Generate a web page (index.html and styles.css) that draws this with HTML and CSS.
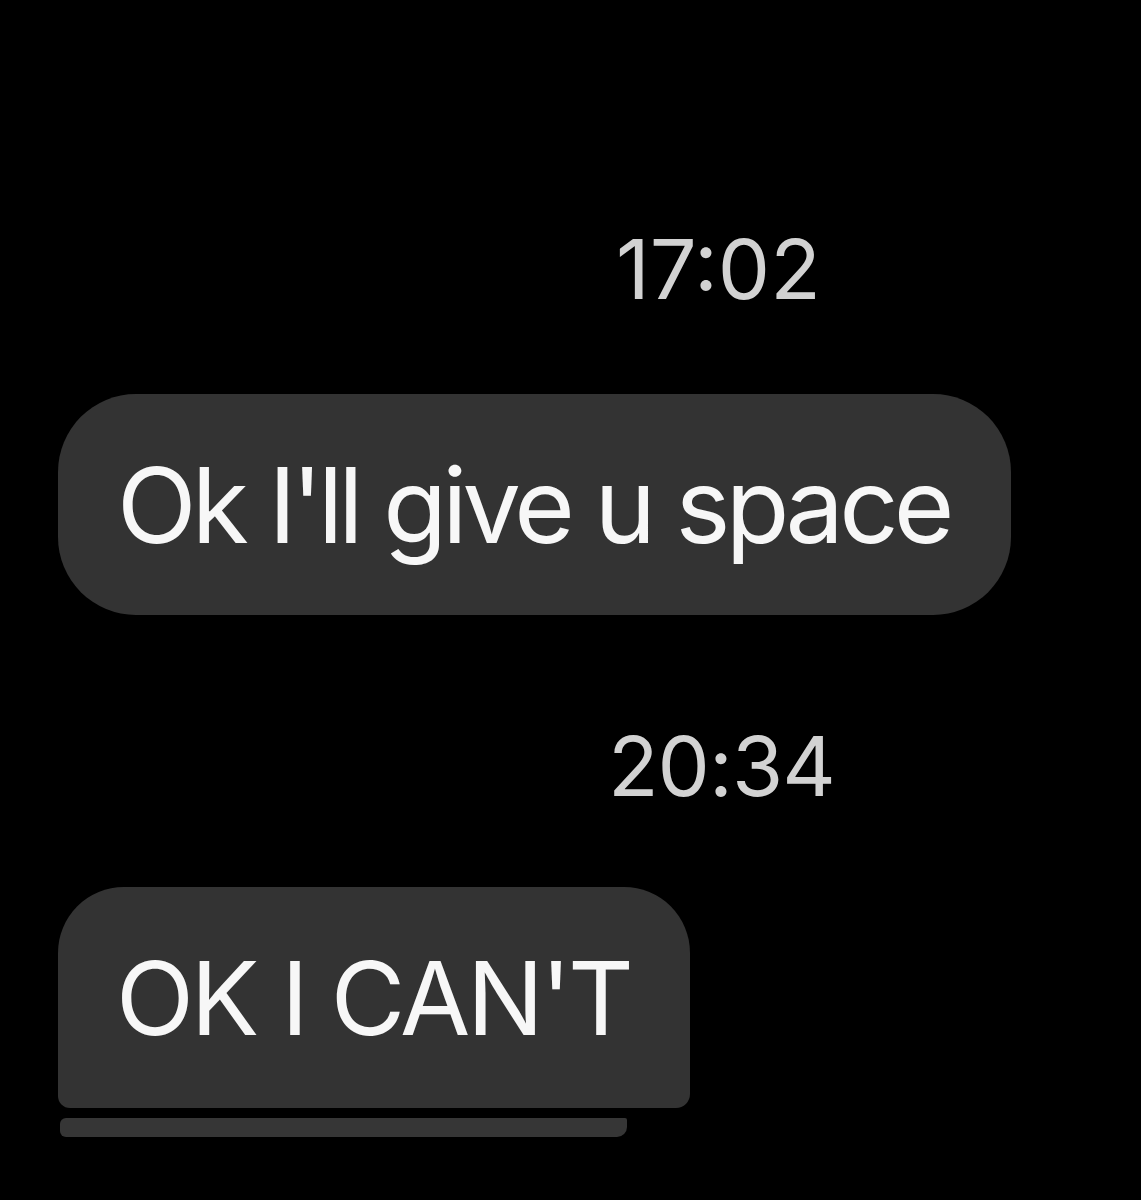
FILE: index.html
```html
<!DOCTYPE html>
<html>
<head>
    <title>Messages</title>
    <meta charset="utf-8">
    <link rel="stylesheet" href="styles.css">
</head>
<body>
    <div class="thread">
        <div class="stamp">17:02</div>
        <div class="bubble bubble_round">Ok I'll give u space</div>

        <div class="stamp stamp_second">20:34</div>
        <div class="bubble bubble_cut">OK I CAN'T</div>
        <div class="bubble_edge"></div>
    </div>
</body>
</html>
```

FILE: styles.css
```css
body {
    margin: 0;
    background-color: #000;
    font-family: Inter, "Liberation Sans", Arial, sans-serif;
}

.thread {
    display: flex;
    flex-direction: column;
    align-items: flex-start;
    padding: 228px 0 0 58px;
    height: 972px;
}

.stamp {
    margin-left: 558px;
    font-size: 83px;
    line-height: 1;
    color: #d2d2d2;
}
.stamp_second {
    margin-top: 110px;
    margin-left: 550px;
    letter-spacing: -1px;
}

.bubble {
    display: flex;
    align-items: center;
    box-sizing: border-box;
    background-color: #333;
    color: #f7f7f7;
    line-height: 1;
    white-space: nowrap;
}
.bubble_round {
    margin-top: 83px;
    height: 221px;
    padding: 0 61px 0 59px;
    border-radius: 78px;
    font-size: 104px;
    letter-spacing: -4.8px;
}
.bubble_cut {
    margin-top: 79px;
    height: 221px;
    width: 632px;
    padding: 0 58px;
    border-radius: 66px 66px 14px 12px;
    font-size: 102px;
    letter-spacing: -3.3px;
}
.bubble_edge {
    margin-top: 10px;
    margin-left: 2px;
    width: 567px;
    height: 19px;
    background-color: #363636;
    border-radius: 6px 2px 10px 6px;
}
```
